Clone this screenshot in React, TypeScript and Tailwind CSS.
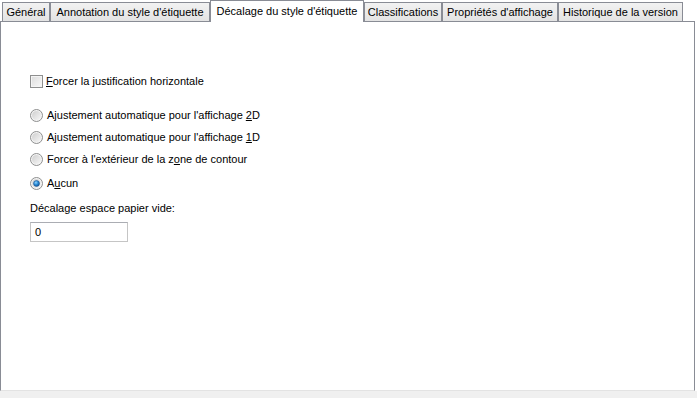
import React from 'react';

const tabs = [
  { label: 'Général', w: 'w-[48px]' },
  { label: "Annotation du style d'étiquette", w: 'w-[160px]' },
  { label: "Décalage du style d'étiquette", w: 'w-[154px]', active: true },
  { label: 'Classifications', w: 'w-[78px]' },
  { label: "Propriétés d'affichage", w: 'w-[116px]' },
  { label: 'Historique de la version', w: 'w-[125px]' },
];

function Radio({ checked }: { checked?: boolean }) {
  return (
    <svg width="13" height="13" viewBox="0 0 13 13" className="shrink-0">
      <defs>
        <linearGradient id="rg" x1="0" y1="0" x2="1" y2="1">
          <stop offset="0" stopColor="#cfcfcf" />
          <stop offset="1" stopColor="#f6f6f6" />
        </linearGradient>
        <radialGradient id="dot" cx="0.4" cy="0.35" r="0.7">
          <stop offset="0" stopColor="#8fd3ff" />
          <stop offset="0.5" stopColor="#2a8ad4" />
          <stop offset="1" stopColor="#0c4f95" />
        </radialGradient>
      </defs>
      <circle cx="6.5" cy="6.5" r="6" fill="#f4f4f4" stroke="#8e8f8f" strokeWidth="1" />
      <circle cx="6.5" cy="6.5" r="4.5" fill="url(#rg)" />
      {checked ? <circle cx="6.5" cy="6.5" r="3" fill="url(#dot)" stroke="#1a4f8a" strokeWidth="0.5" /> : null}
    </svg>
  );
}

function RadioRow({ checked, className, children }: { checked?: boolean; className?: string; children: React.ReactNode }) {
  return (
    <div className={`flex h-[22px] items-center gap-[4px] ${className ?? ''}`}>
      <Radio checked={checked} />
      <span>{children}</span>
    </div>
  );
}

export default function App() {
  return (
    <div className="relative h-[398px] w-[697px] overflow-hidden bg-white font-['Liberation_Sans',sans-serif] text-[11px] text-black">
      <div className="flex h-[21px] items-end pl-[2px]">
        {tabs.map((t) =>
          t.active ? (
            <div
              key={t.label}
              className={`${t.w} relative z-10 -mb-px flex h-[22px] shrink-0 items-start justify-center border border-b-0 border-[#898c95] bg-white pt-[2px]`}
            >
              {t.label}
            </div>
          ) : (
            <div
              key={t.label}
              className={`${t.w} flex h-[19px] shrink-0 items-center justify-center border border-b-0 border-[#898c95] bg-gradient-to-b from-[#f2f2f2] to-[#e3e3e3] pt-px`}
            >
              {t.label}
            </div>
          )
        )}
      </div>
      <div className="h-[370px] w-[695px] border border-[#898c95] border-b-[#e3e3e3] bg-white pl-[29px] pt-[48px]">
        <div className="flex h-[22px] items-center gap-[3px]">
          <span className="h-[13px] w-[13px] shrink-0 border border-[#8e8f8f] bg-gradient-to-br from-[#dcdcdc] to-[#f8f8f8] shadow-[inset_0_0_0_1px_#f4f4f4]" />
          <span>
            <span className="underline">F</span>orcer la justification horizontale
          </span>
        </div>
        <div className="mt-[12px]">
          <RadioRow>
            Ajustement automatique pour l'affichage <span className="underline">2</span>D
          </RadioRow>
          <RadioRow>
            Ajustement automatique pour l'affichage <span className="underline">1</span>D
          </RadioRow>
          <RadioRow>
            Forcer à l'extérieur de la z<span className="underline">o</span>ne de contour
          </RadioRow>
          <RadioRow checked className="mt-[2px]">
            A<span className="underline">u</span>cun
          </RadioRow>
        </div>
        <div className="mt-[7px] flex h-[14px] items-center">Décalage espace papier vide:</div>
        <div className="mt-[7px] flex h-[20px] w-[98px] items-center border border-[#c5c5c5] border-t-[#abadb3] pl-[4px]">
          0
        </div>
      </div>
      <div className="h-[7px] bg-[#f0f0f0]" />
    </div>
  );
}
